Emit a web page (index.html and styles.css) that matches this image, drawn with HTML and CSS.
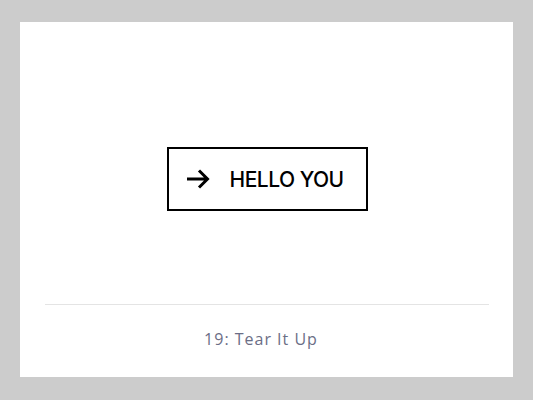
FILE: index.html
```html
<!DOCTYPE html>
<html lang="en">
<head>
    <meta charset="UTF-8">
    <meta name="viewport" content="width=device-width, initial-scale=1.0">
    <title>19: Tear It Up</title>
    <link rel="stylesheet" href="styles.css">
</head>
<body>
    <main class="card">
        <div class="stage">
            <a class="btn" href="#">
                <svg class="btn-icon" viewBox="0 0 24 24" width="24" height="24" aria-hidden="true">
                    <path d="M1 12h21M13 3.5l8.5 8.5-8.5 8.5" fill="none" stroke="#000" stroke-width="3" stroke-linecap="butt" stroke-linejoin="miter"/>
                </svg>
                <span class="btn-label">HELLO YOU</span>
            </a>
        </div>
        <footer class="caption">
            <p>19: Tear It Up</p>
        </footer>
    </main>
</body>
</html>
```

FILE: styles.css
```css
html {
    background: #cccccc;
}

body {
    margin: 0;
    padding: 22px 20px 23px;
    font-family: "Open Sans", sans-serif;
}

.card {
    background: #ffffff;
    height: 355px;
    display: flex;
    flex-direction: column;
    padding: 0 24px 0 25px;
    box-sizing: border-box;
}

.stage {
    height: 283px;
    display: flex;
    justify-content: center;
    align-items: flex-start;
    padding-top: 125px;
    box-sizing: border-box;
    border-bottom: 1px solid #e4e4e4;
}

.btn {
    display: flex;
    align-items: center;
    gap: 20px;
    height: 64px;
    width: 201px;
    box-sizing: border-box;
    padding: 0 0 0 17px;
    border: 2px solid #000000;
    color: #000000;
    text-decoration: none;
}

.btn-icon {
    flex: none;
}

.btn-label {
    font-family: "Inter", sans-serif;
    font-weight: 500;
    font-size: 21px;
    letter-spacing: -0.5px;
}

.caption {
    text-align: center;
    padding-top: 22px;
}

.caption p {
    margin: 0;
    font-size: 16px;
    line-height: 24px;
    letter-spacing: 1px;
    color: #6b6e86;
    padding-right: 12px;
}
```
